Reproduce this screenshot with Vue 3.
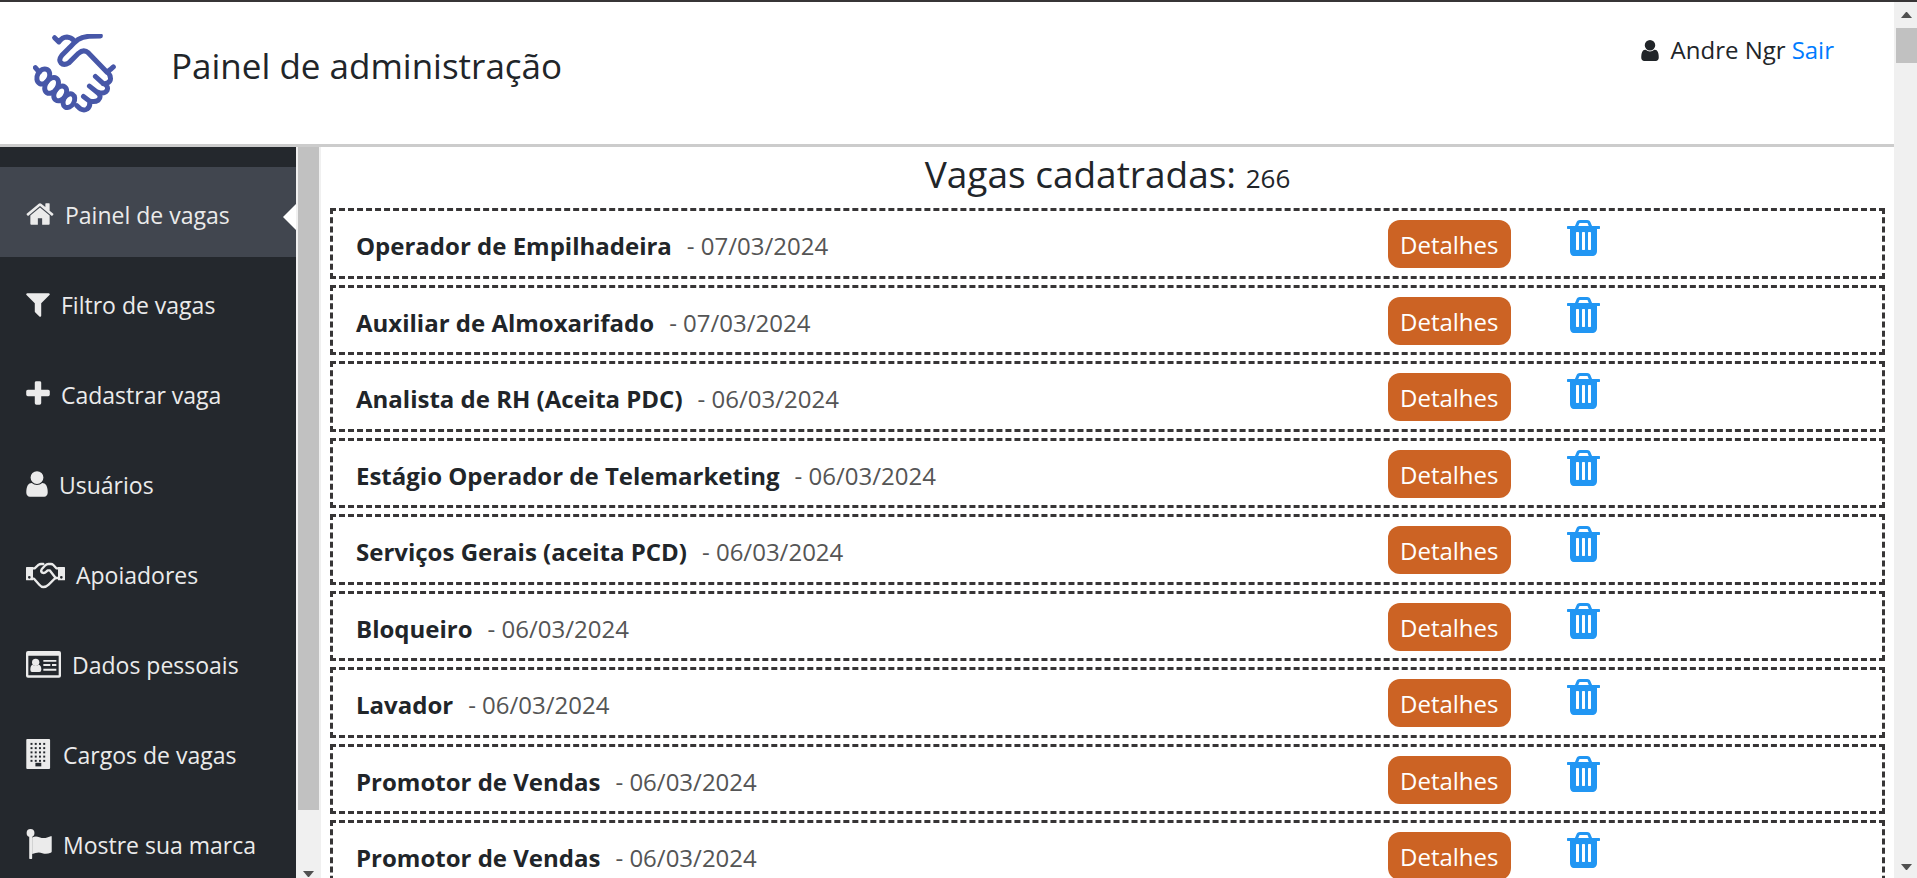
<script setup>
const menu = [
  { label: 'Painel de vagas', icon: 'home', width: 28, box: '64 0 1664 1792', active: true },
  { label: 'Filtro de vagas', icon: 'filter', width: 24, box: '192 0 1408 1792' },
  { label: 'Cadastrar vaga', icon: 'plus', width: 24, box: '192 0 1408 1792' },
  { label: 'Usuários', icon: 'user', width: 22, box: '256 0 1280 1792' },
  { label: 'Apoiadores', icon: 'handshake', width: 39, box: '0 0 117 90' },
  { label: 'Dados pessoais', icon: 'card', width: 35, box: '0 0 105 90' },
  { label: 'Cargos de vagas', icon: 'building', width: 26, box: '0 0 78 92' },
  { label: 'Mostre sua marca', icon: 'flag', width: 26, box: '0 0 78 92' },
]

const jobs = [
  { title: 'Operador de Empilhadeira', date: '07/03/2024' },
  { title: 'Auxiliar de Almoxarifado', date: '07/03/2024' },
  { title: 'Analista de RH (Aceita PDC)', date: '06/03/2024' },
  { title: 'Estágio Operador de Telemarketing', date: '06/03/2024' },
  { title: 'Serviços Gerais (aceita PCD)', date: '06/03/2024' },
  { title: 'Bloqueiro', date: '06/03/2024' },
  { title: 'Lavador', date: '06/03/2024' },
  { title: 'Promotor de Vendas', date: '06/03/2024' },
  { title: 'Promotor de Vendas', date: '06/03/2024' },
]

const windowRows = [12, 25, 38, 51, 64]
const windowCols = [15, 28, 41, 54]

const userPath =
  'M1536 1399q0 109-62.5 187t-150.5 78h-854q-88 0-150.5-78t-62.5-187q0-85 8.5-160.5t31.5-152 58.5-131 94-89 134.5-34.5q131 128 313 128t313-128q76 0 134.5 34.5t94 89 58.5 131 31.5 152 8.5 160.5zm-256-887q0 159-112.5 271.5t-271.5 112.5-271.5-112.5-112.5-271.5 112.5-271.5 271.5-112.5 271.5 112.5 112.5 271.5z'

const solidPaths = {
  home: 'M1472 992v480q0 26-19 45t-45 19h-384v-384h-256v384h-384q-26 0-45-19t-19-45v-480q0-1 .5-3t.5-3l575-474 575 474q1 2 1 6zm223-69l-62 74q-8 9-21 11h-3q-13 0-21-7l-692-577-692 577q-12 8-24 7-13-2-21-11l-62-74q-8-10-7-23.5t11-21.5l719-599q32-26 76-26t76 26l244 204v-195q0-14 9-23t23-9h192q14 0 23 9t9 23v408l219 182q10 8 11 21.5t-7 23.5z',
  filter: 'M1595 295q17 41-14 70l-493 493v742q0 42-39 59-13 5-25 5-27 0-45-19l-256-256q-19-19-19-45v-486l-493-493q-31-29-14-70 17-39 59-39h1280q42 0 59 39z',
  plus: 'M1600 736v192q0 40-28 68t-68 28h-416v416q0 40-28 68t-68 28h-192q-40 0-68-28t-28-68v-416h-416q-40 0-68-28t-28-68v-192q0-40 28-68t68-28h416v-416q0-40 28-68t68-28h192q40 0 68 28t28 68v416h416q40 0 68 28t28 68z',
  user: userPath,
}

const trashPath =
  'M704 1376v-704q0-14-9-23t-23-9h-64q-14 0-23 9t-9 23v704q0 14 9 23t23 9h64q14 0 23-9t9-23zm256 0v-704q0-14-9-23t-23-9h-64q-14 0-23 9t-9 23v704q0 14 9 23t23 9h64q14 0 23-9t9-23zm256 0v-704q0-14-9-23t-23-9h-64q-14 0-23 9t-9 23v704q0 14 9 23t23 9h64q14 0 23-9t9-23zm-544-992h448l-48-117q-7-9-17-11h-317q-10 2-17 11zm928 32v64q0 14-9 23t-23 9h-96v948q0 83-47 143.5t-113 60.5h-832q-66 0-113-58.5t-47-141.5v-952h-96q-14 0-23-9t-9-23v-64q0-14 9-23t23-9h309l70-167q15-37 54-63t79-26h320q40 0 79 26t54 63l70 167h309q14 0 23 9t9 23z'
</script>

<template>
  <div class="window">
    <div class="page">
      <header class="top">
        <svg class="logo" viewBox="39 42 250 238" aria-hidden="true">
          <g fill="none" stroke="#4757a8" stroke-width="15" stroke-linecap="round" stroke-linejoin="round">
            <path d="M104 53L117 66Q127 51 141 51Q153 52 163 62" />
            <path d="M242 48L208 49Q188 50 174 59Q162 68 150 82L126 106Q115 120 123 129Q132 138 147 129L176 100Q192 86 206 99L262 157L272 149L281 141" />
            <path d="M264 156Q276 172 271 183Q264 193 251 192M227 170L250 191Q268 198 262 212Q254 224 236 218M209 199L234 219Q247 230 236 241Q224 249 208 243M191 230L208 243Q214 258 202 268Q188 277 171 258" />
            <path d="M46 143L58 157" />
            <ellipse cx="70" cy="170" rx="18" ry="24" transform="rotate(28 70 170)" />
            <ellipse cx="95" cy="197" rx="18" ry="26" transform="rotate(34 95 197)" />
            <ellipse cx="121" cy="221" rx="17" ry="24" transform="rotate(34 121 221)" />
            <ellipse cx="147" cy="243" rx="16" ry="22" transform="rotate(30 147 243)" />
          </g>
        </svg>
        <h1>Painel de administração</h1>
        <div class="account">
          <svg class="account-icon" viewBox="256 128 1280 1536" aria-hidden="true"><path :d="userPath" /></svg>
          <span>Andre Ngr</span>
          <a href="#sair">Sair</a>
        </div>
      </header>

      <div class="body">
        <nav class="menu">
          <a
            v-for="item in menu"
            :key="item.label"
            href="#"
            class="menu-item"
            :class="{ active: item.active }"
          >
            <svg class="menu-icon" :width="item.width" height="30" :viewBox="item.box" aria-hidden="true">
              <path v-if="solidPaths[item.icon]" :d="solidPaths[item.icon]" />
              <g v-else-if="item.icon === 'handshake'">
                <path fill-rule="evenodd" d="M2 24H21V64H2Q0 64 0 62V26Q0 24 2 24ZM10 51A4 4 0 1 0 10 59A4 4 0 1 0 10 51Z" />
                <path fill-rule="evenodd" d="M96 24H115Q117 24 117 26V62Q117 64 115 64H96ZM106 51A4 4 0 1 0 106 59A4 4 0 1 0 106 51Z" />
                <g fill="none" stroke="currentColor" stroke-width="7" stroke-linejoin="round" stroke-linecap="round">
                  <path d="M20 28H26L38 17Q41 15 45 15H52" />
                  <path d="M97 28H91L82 18Q79 15 75 15H67Q62 15 58 19L47 31Q43 37 49 41Q55 44 61 38L65 34H71L89 57" />
                  <path d="M97 57H88L68 77Q61 84 52 84Q46 84 40 77L24 59H20" />
                </g>
              </g>
              <g v-else-if="item.icon === 'card'">
                <path fill-rule="evenodd" d="M6 6H99Q105 6 105 12V80Q105 86 99 86H6Q0 86 0 80V12Q0 6 6 6ZM7 20V78Q7 79 8 79H97Q98 79 98 78V20Z" />
                <circle cx="29" cy="40" r="11" />
                <path d="M20 47Q29 55 38 47Q46 49 46 62Q46 69 40 69H18Q13 69 13 62Q13 49 20 47Z" />
                <path d="M52 33H91V38H52ZM52 45H73V51H52ZM78 45H91V51H78ZM52 59H91V65H52Z" />
              </g>
              <g v-else-if="item.icon === 'building'">
                <rect width="73" height="92" rx="3" />
                <g class="holes">
                  <template v-for="y in windowRows" :key="y">
                    <rect v-for="x in windowCols" :key="x" :x="x - 2" :y="y" width="6" height="6" />
                  </template>
                  <rect x="28" y="73" width="18" height="11" />
                </g>
              </g>
              <g v-else>
                <circle cx="13" cy="12" r="12" />
                <path d="M9 20H18V90Q18 92 16 92H11Q9 92 9 90Z" />
                <path d="M18 26Q28 21 40 25Q53 30 64 26L75 22Q78 21 78 25V69Q78 72 75 73Q61 79 49 74Q36 69 18 77Z" />
              </g>
            </svg>
            <span>{{ item.label }}</span>
          </a>
        </nav>
        <div class="bar side-bar" aria-hidden="true">
          <div class="side-thumb"></div>
          <svg class="arrow" viewBox="0 0 11 6"><path d="M0 0H11L6 6H5Z" /></svg>
        </div>

        <main>
          <h2>Vagas cadatradas: <small>266</small></h2>
          <ul>
            <li v-for="(job, i) in jobs" :key="i" class="job">
              <div class="job-name">
                <strong>{{ job.title }}</strong>
                <span>- {{ job.date }}</span>
              </div>
              <div><button type="button" class="details">Detalhes</button></div>
              <div>
                <button type="button" class="remove" aria-label="Excluir vaga">
                  <svg viewBox="192 128 1408 1536" aria-hidden="true"><path :d="trashPath" /></svg>
                </button>
              </div>
            </li>
          </ul>
        </main>
      </div>
    </div>

    <div class="bar page-bar" aria-hidden="true">
      <svg class="arrow" viewBox="0 0 11 6"><path d="M0 6H11L6 0H5Z" /></svg>
      <div class="page-thumb"></div>
      <svg class="arrow" viewBox="0 0 11 6"><path d="M0 0H11L6 6H5Z" /></svg>
    </div>
  </div>
</template>

<style>
body {
  margin: 0;
  overflow: hidden;
}
</style>

<style scoped>
* {
  box-sizing: border-box;
}

.window {
  display: flex;
  height: 100vh;
  overflow: hidden;
  border-top: 2px solid #373536;
  background: #fff;
  color: #212529;
  font-family: "Open Sans", "Noto Sans", sans-serif;
  font-size: 24px;
  line-height: 1.5;
}

.page {
  display: flex;
  flex: 1;
  flex-direction: column;
  min-width: 0;
}

.top {
  display: flex;
  flex: none;
  align-items: flex-start;
  padding: 32px 60px 31px 33px;
  border-bottom: 3px solid #ccc;
}

.logo {
  width: 83px;
  height: 79px;
}

h1 {
  margin: 8px 0 0 55px;
  font-size: 35px;
  font-weight: 400;
  line-height: 48px;
}

.account {
  display: flex;
  align-items: center;
  gap: 6px;
  margin-left: auto;
  line-height: 32px;
}

.account-icon {
  width: 18px;
  height: 21px;
  margin-right: 6px;
  fill: currentColor;
}

.account a {
  color: #007bff;
  text-decoration: none;
}

.body {
  display: flex;
  flex: 1;
  min-height: 0;
}

.menu {
  flex: none;
  width: 296px;
  padding-top: 20px;
  overflow: hidden;
  background: #24282d;
}

.menu-item {
  position: relative;
  display: flex;
  align-items: center;
  gap: 11px;
  height: 90px;
  padding: 3px 0 0 26px;
  color: #ebebeb;
  font-size: 23px;
  font-weight: 500;
  text-decoration: none;
}

.menu-item span {
  padding-top: 4px;
}

.menu-icon {
  flex: none;
  overflow: visible;
  fill: currentColor;
}

.holes {
  fill: #24282d;
}

.active {
  background: #41464f;
}

.active::after {
  position: absolute;
  top: 37px;
  right: 0;
  border: 13px solid transparent;
  border-right-color: #fff;
  border-left-width: 0;
  content: "";
}

.bar {
  display: flex;
  flex: none;
  flex-direction: column;
  align-items: center;
  justify-content: space-between;
  background: #f0f0f0;
}

.side-bar {
  width: 25px;
  padding-bottom: 1px;
}

.side-thumb {
  width: 21px;
  height: 663px;
  background: #c1c1c1;
}

.page-bar {
  width: 23px;
  padding: 10px 0 8px 2px;
}

.page-thumb {
  width: 21px;
  height: 35px;
  margin: 10px 0 auto;
  background: #c1c1c1;
}

.arrow {
  width: 11px;
  height: 6px;
  fill: #505050;
}

main {
  flex: 1;
  min-width: 0;
  padding: 0 9px;
  overflow: hidden;
}

h2 {
  margin: 0;
  padding: 3px 0 10px;
  font-size: 37px;
  font-weight: 400;
  line-height: 48px;
  text-align: center;
}

h2 small {
  font-size: 26px;
  line-height: 1;
}

ul {
  margin: 0;
  padding: 0;
  list-style: none;
}

.job {
  display: grid;
  grid-template-columns: minmax(0, 1fr) 179px 315px;
  align-items: start;
  margin-bottom: 6px;
  padding: 9px 0 7px 23px;
  border: 3px dashed #373536;
}

.job-name {
  padding: 7px 0 4px;
  font-size: 25px;
  line-height: 1.5;
}

.job-name strong {
  margin-right: 15px;
  font-size: 24px;
  font-weight: 700;
}

.job-name span {
  color: #555;
  font-size: 24px;
}

button {
  display: block;
  border: 0;
  font: inherit;
}

.details {
  padding: 7px 13px 5px 12px;
  border-radius: 12px;
  background: #cc6324;
  color: #fff;
}

.remove {
  padding: 0;
  background: none;
}

.remove svg {
  display: block;
  width: 33px;
  height: 36px;
  fill: #2196f3;
}
</style>
